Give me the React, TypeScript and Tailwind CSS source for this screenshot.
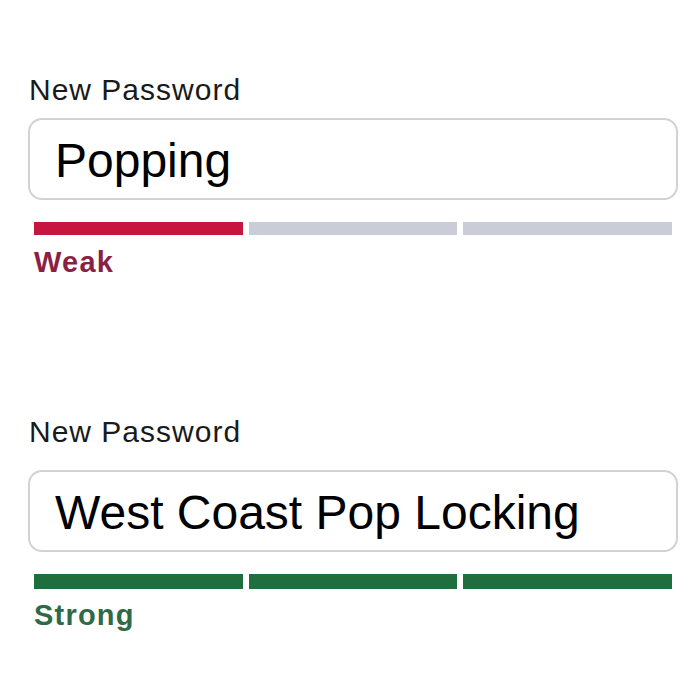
import React from 'react';

type Strength = 'weak' | 'strong';

const barColor: Record<Strength, string> = {
    weak: 'bg-[#c8153f]',
    strong: 'bg-[#1f6e3d]',
};

const PasswordField: React.FC<{
    value: string;
    strength: Strength;
    labelGap: string;
    barHeight: string;
}> = ({ value, strength, labelGap, barHeight }) => {
    const filled = strength === 'weak' ? 1 : 3;
    return (
        <div className="flex flex-col w-[650px]">
            <label className="ml-[1px] text-[30px] leading-[30px] tracking-[1px] text-[#1a1a1a]">New Password</label>
            <div
                className={`${labelGap} h-[82px] w-[650px] rounded-[14px] border-2 border-[#d2d2d2] bg-white flex items-center pl-[25px] pt-1 text-[48px] leading-[48px] text-black`}
            >
                {value}
            </div>
            <div className="mt-[22px] mx-[6px] flex gap-[6px]">
                {[0, 1, 2].map((i) => (
                    <div
                        key={i}
                        className={`flex-1 ${barHeight} ${i < filled ? barColor[strength] : 'bg-[#cacdd8]'}`}
                    />
                ))}
            </div>
            {strength === 'weak' ? (
                <span className="mt-[13px] ml-[6px] text-[29px] leading-[28px] tracking-[1.2px] font-bold text-[#8c1f45]">Weak</span>
            ) : (
                <span className="mt-[12px] ml-[6px] text-[29px] leading-[28px] tracking-[1.2px] font-bold text-[#2e6a44]">Strong</span>
            )}
        </div>
    );
};

export default function App() {
    return (
        <div className="w-[700px] h-[686px] bg-white pl-[28px] pt-[75px] font-['Liberation_Sans',Arial,sans-serif] overflow-hidden">
            <PasswordField value="Popping" strength="weak" labelGap="mt-[13px]" barHeight="h-[13px]" />
            <div className="mt-[141px]">
                <PasswordField
                    value="West Coast Pop Locking"
                    strength="strong"
                    labelGap="mt-[23px]"
                    barHeight="h-[15px]"
                />
            </div>
        </div>
    );
}
